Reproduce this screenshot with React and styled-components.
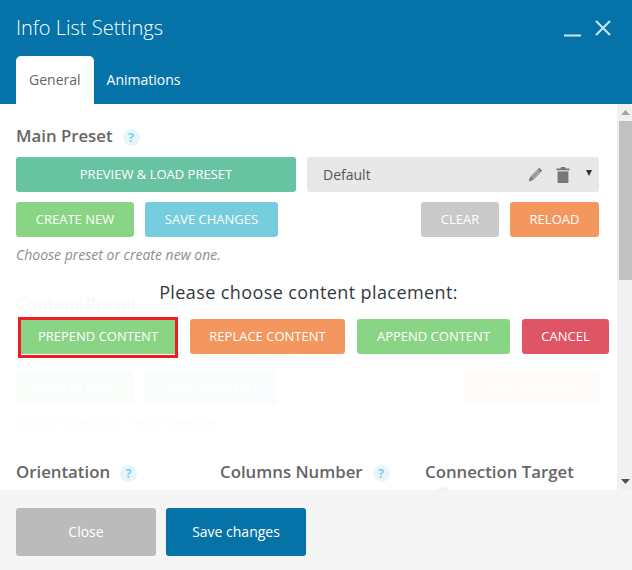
import styled, { createGlobalStyle } from "styled-components";
import { useState } from "react";

const GlobalStyle = createGlobalStyle`
  html, body {
    margin: 0;
    padding: 0;
    background: #fff;
    font-family: "Open Sans", "Liberation Sans", sans-serif;
  }
  * { box-sizing: border-box; }
`;

const COLORS = {
  blue: "#0573a8",
  teal: "#68c3a3",
  green: "#89d585",
  cyan: "#75cdde",
  grey: "#c9c9c9",
  orange: "#f3975f",
  red: "#e05565",
};

const Modal = styled.div`
  width: 632px;
  height: 570px;
  display: flex;
  flex-direction: column;
  overflow: hidden;
`;

const Header = styled.header`
  height: 104px;
  flex: none;
  background: ${COLORS.blue};
  padding: 14px 16px 0;
  display: flex;
  flex-direction: column;
  justify-content: space-between;
`;

const TitleRow = styled.div`
  display: flex;
  justify-content: space-between;
  align-items: center;
`;

const Title = styled.h1`
  margin: 0;
  font-size: 20px;
  line-height: 27px;
  font-weight: 300;
  color: #fff;
`;

const WindowButtons = styled.div`
  display: flex;
  align-items: center;
  gap: 14px;
  margin-right: 5px;
  color: #cfe6f1;
`;

const Tabs = styled.div`
  display: flex;
`;

const Tab = styled.div`
  height: 48px;
  padding: 0 13px 2px;
  display: flex;
  align-items: center;
  font-size: 14px;
  border-radius: 5px 5px 0 0;
  background: ${(p) => (p.$active ? "#fff" : "transparent")};
  color: ${(p) => (p.$active ? "#666" : "#fff")};
  font-weight: ${(p) => (p.$active ? 400 : 500)};
`;

const Body = styled.div`
  position: relative;
  flex: 1;
  min-height: 0;
  display: flex;
  background: #fff;
`;

const Content = styled.div`
  flex: 1;
  min-width: 0;
  padding: 21px 18px 0 16px;
  overflow: hidden;
`;

const Track = styled.div`
  width: 15px;
  flex: none;
  background: #f1f1f1;
  display: flex;
  flex-direction: column;
  align-items: center;
  padding-left: 2px;
`;

const TrackArrow = styled.div`
  height: 17px;
  width: 100%;
  display: flex;
  align-items: center;
  justify-content: center;
  color: #a3a3a3;
`;

const Thumb = styled.div`
  width: 13px;
  height: 159px;
  background: #c1c1c1;
`;

const TrackSpacer = styled.div`
  flex: 1;
`;

const Section = styled.section`
  margin-bottom: ${(p) => p.$gap || 0}px;
`;

const Heading = styled.h3`
  margin: 0 0 10px;
  font-size: 16.8px;
  line-height: 22px;
  font-weight: 600;
  color: #666;
`;

const Help = styled.span`
  display: inline-flex;
  align-items: center;
  justify-content: center;
  width: 17px;
  height: 17px;
  margin-left: 10px;
  border-radius: 50%;
  background: #e8f6fb;
  color: #7fd0ea;
  font-size: 13px;
  font-weight: 700;
  vertical-align: 0;
`;

const Row = styled.div`
  display: flex;
  gap: 11px;
  margin-bottom: 10px;
`;

const Spacer = styled.div`
  flex: 1;
`;

const Button = styled.div`
  height: 35px;
  width: ${(p) => p.$w}px;
  flex: none;
  padding-bottom: 2px;
  display: flex;
  align-items: center;
  justify-content: center;
  border-radius: 3px;
  background: ${(p) => p.$bg};
  color: #fff;
  font-size: 13px;
  white-space: nowrap;
  cursor: pointer;
`;

const Select = styled.div`
  height: 35px;
  flex: 1;
  display: flex;
  align-items: center;
  padding: 0 7px 0 16px;
  border-radius: 3px;
  background: #e8e8e8;
  color: #555;
  font-size: 14px;
`;

const SelectIcons = styled.div`
  margin-left: auto;
  display: flex;
  align-items: center;
  color: #777;
`;

const IconGap = styled.span`
  width: 13px;
`;

const Caret = styled.span`
  width: 0;
  height: 0;
  margin: -4px 0 0 16px;
  border-left: 3px solid transparent;
  border-right: 3px solid transparent;
  border-top: 6px solid #333;
`;

const Hint = styled.p`
  margin: -2px 0 0;
  font-size: 14px;
  line-height: 20px;
  font-style: italic;
  color: #8d8d8d;
`;

const Columns = styled.div`
  display: grid;
  grid-template-columns: 204px 205px 174px;
`;

const Overlay = styled.div`
  position: absolute;
  left: 0;
  right: 15px;
  top: 166px;
  height: 172px;
  background: rgba(255, 255, 255, 0.96);
  padding-top: 9px;
  display: flex;
  flex-direction: column;
  align-items: center;
`;

const Prompt = styled.div`
  font-size: 18px;
  line-height: 26px;
  font-weight: 500;
  letter-spacing: 0.4px;
  color: #333a42;
  margin: 0 0 14px 0;
`;

const PromptActions = styled.div`
  display: flex;
  align-self: flex-start;
  margin-left: 21px;
  gap: 12px;
`;

const PromptButton = styled(Button)`
  ${(p) => p.$focused && `
    outline: 3px solid #ee1c25;
    margin: 1px 3px 0 0;
    border-radius: 0;
    border-bottom: 1px solid #fff;
  `}
`;

const Footer = styled.footer`
  height: 80px;
  flex: none;
  background: #f5f5f5;
  padding: 18px 16px 0;
  display: flex;
  gap: 10px;
`;

const FooterButton = styled.div`
  width: 140px;
  height: 48px;
  padding-bottom: 2px;
  display: flex;
  align-items: center;
  justify-content: center;
  border-radius: 3px;
  background: ${(p) => p.$bg};
  color: #fff;
  font-size: 14px;
  cursor: pointer;
`;

const Pencil = () => (
  <svg width="15" height="15" viewBox="0 0 16 16" fill="currentColor">
    <path d="M12 .8 15.2 4 5.4 13.8 .6 15.4 2.2 10.6Z" />
    <path d="M3.6 10.9 11.4 3.1M5.1 12.4 12.9 4.6" stroke="#e8e8e8" strokeWidth="1" />
  </svg>
);

const Trash = () => (
  <svg width="14" height="16" viewBox="0 0 14 16" fill="currentColor">
    <path d="M5 0h4l.5 1.5H13.5V3.2H.5V1.5H4.5Z" />
    <path d="M1.6 4.4H12.4V16H1.6Z" />
  </svg>
);

const PRESET_ACTIONS = [
  { label: "PREPEND CONTENT", bg: COLORS.green, w: 154 },
  { label: "REPLACE CONTENT", bg: COLORS.orange, w: 155 },
  { label: "APPEND CONTENT", bg: COLORS.green, w: 153 },
  { label: "CANCEL", bg: COLORS.red, w: 87 },
];

export default function App() {
  const [focused] = useState(0);

  return (
    <>
      <GlobalStyle />
      <Modal>
        <Header>
          <TitleRow>
            <Title>Info List Settings</Title>
            <WindowButtons>
              <svg width="17" height="20" viewBox="0 0 17 20">
                <path d="M0 17.5H17" stroke="currentColor" strokeWidth="2" />
              </svg>
              <svg width="16" height="16" viewBox="0 0 16 16">
                <path d="M1 1 15 15M15 1 1 15" stroke="currentColor" strokeWidth="2" />
              </svg>
            </WindowButtons>
          </TitleRow>
          <Tabs>
            <Tab $active>General</Tab>
            <Tab>Animations</Tab>
          </Tabs>
        </Header>
        <Body>
          <Content>
            <Section $gap={28}>
              <Heading>
                Main Preset<Help>?</Help>
              </Heading>
              <Row>
                <Button $bg={COLORS.teal} $w={280}>PREVIEW &amp; LOAD PRESET</Button>
                <Select>
                  Default
                  <SelectIcons>
                    <Pencil />
                    <IconGap />
                    <Trash />
                    <Caret />
                  </SelectIcons>
                </Select>
              </Row>
              <Row>
                <Button $bg={COLORS.green} $w={118}>CREATE NEW</Button>
                <Button $bg={COLORS.cyan} $w={133}>SAVE CHANGES</Button>
                <Spacer />
                <Button $bg={COLORS.grey} $w={78}>CLEAR</Button>
                <Button $bg={COLORS.orange} $w={89}>RELOAD</Button>
              </Row>
              <Hint>Choose preset or create new one.</Hint>
            </Section>
            <Section $gap={28}>
              <Heading>
                Content Preset<Help>?</Help>
              </Heading>
              <Row>
                <Button $bg={COLORS.teal} $w={280}>PREVIEW &amp; LOAD CONTENT</Button>
                <Select>Subtitle Right</Select>
              </Row>
              <Row>
                <Button $bg={COLORS.green} $w={118}>CREATE NEW</Button>
                <Button $bg={COLORS.cyan} $w={132}>SAVE CONTENT</Button>
                <Spacer />
                <Button $bg={COLORS.orange} $w={136}>LOAD CONTENT</Button>
              </Row>
              <Hint>Choose preset or create new one.</Hint>
            </Section>
            <Columns>
              <Heading>
                Orientation<Help>?</Help>
              </Heading>
              <Heading>
                Columns Number<Help>?</Help>
              </Heading>
              <Heading>
                Connection Target<Help>?</Help>
              </Heading>
            </Columns>
          </Content>
          <Track>
            <TrackArrow>
              <svg width="9" height="5" viewBox="0 0 9 5" fill="currentColor"><path d="M4.5 0 9 5H0Z" /></svg>
            </TrackArrow>
            <Thumb />
            <TrackSpacer />
            <TrackArrow>
              <svg width="9" height="5" viewBox="0 0 9 5" fill="#505050"><path d="M0 0H9L4.5 5Z" /></svg>
            </TrackArrow>
          </Track>
          <Overlay>
            <Prompt>Please choose content placement:</Prompt>
            <PromptActions>
              {PRESET_ACTIONS.map((action, i) => (
                <PromptButton key={action.label} $bg={action.bg} $w={action.w} $focused={i === focused}>
                  {action.label}
                </PromptButton>
              ))}
            </PromptActions>
          </Overlay>
        </Body>
        <Footer>
          <FooterButton $bg="#bbbbbb">Close</FooterButton>
          <FooterButton $bg={COLORS.blue}>Save changes</FooterButton>
        </Footer>
      </Modal>
    </>
  );
}
